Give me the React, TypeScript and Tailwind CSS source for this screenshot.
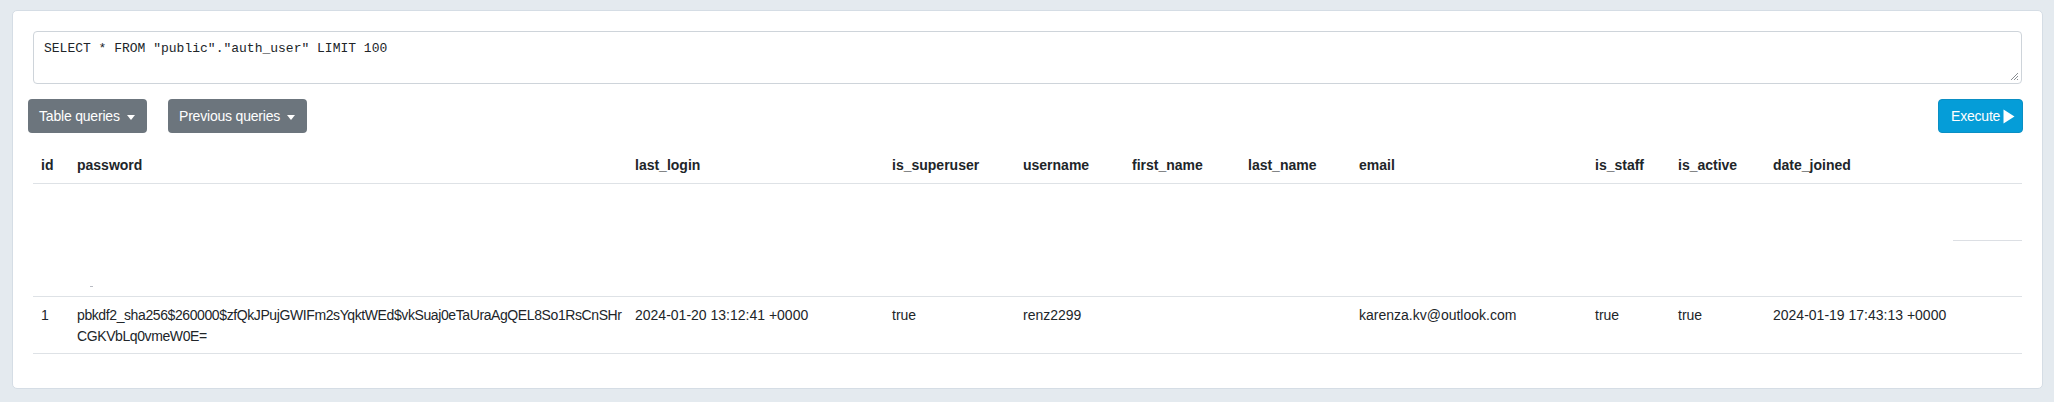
import React from "react";

const columns = [
  { name: "id", w: "w-[36px]" },
  { name: "password", w: "w-[558px]" },
  { name: "last_login", w: "w-[257px]" },
  { name: "is_superuser", w: "w-[131px]" },
  { name: "username", w: "w-[109px]" },
  { name: "first_name", w: "w-[116px]" },
  { name: "last_name", w: "w-[111px]" },
  { name: "email", w: "w-[236px]" },
  { name: "is_staff", w: "w-[83px]" },
  { name: "is_active", w: "w-[95px]" },
  { name: "date_joined", w: "w-[257px]" },
];

// password wraps exactly where the original grid broke it
const passwordLines = [
  "pbkdf2_sha256$260000$zfQkJPujGWIFm2sYqktWEd$vkSuaj0eTaUraAgQEL8So1RsCnSHr",
  "CGKVbLq0vmeW0E=",
];

const rows = [
  [
    "1",
    "",
    "2024-01-20 13:12:41 +0000",
    "true",
    "renz2299",
    "",
    "",
    "karenza.kv@outlook.com",
    "true",
    "true",
    "2024-01-19 17:43:13 +0000",
  ],
];

function Caret() {
  return (
    <span className="inline-block w-0 h-0 border-t-[5px] border-t-white border-x-[4px] border-x-transparent ml-auto mt-[2px]" />
  );
}

function DropButton({ label, w }: { label: string; w: string }) {
  return (
    <button className={`${w} h-[34px] flex items-center pl-[11px] pr-[12px] rounded-[4px] bg-[#6c757d] text-white text-[14px] tracking-[-0.2px]`}>
      {label}
      <Caret />
    </button>
  );
}

export default function App() {
  return (
    <div
      className="h-[402px] bg-[#e4eaef] pt-[10px] pl-[12px] text-[#212529]"
      style={{ fontFamily: '"Liberation Sans", Arial, sans-serif' }}
    >
      <div className="w-[2031px] h-[379px] bg-white border border-[#d5dde5] rounded-[5px] px-[20px] pt-[20px]">
        <div className="h-[53px] border border-[#ced4da] rounded-[4px] px-[10px] py-[8px] font-['Liberation_Mono',monospace] text-[13px] leading-[18px] relative">
          SELECT * FROM "public"."auth_user" LIMIT 100
          <svg className="absolute right-[2px] bottom-[2px]" width="9" height="9" viewBox="0 0 9 9">
            <path d="M8 1L1 8M8 4L4 8M8 7L7 8" stroke="#8a8f94" strokeWidth="1" />
          </svg>
        </div>

        <div className="flex items-center mt-[15px]">
          <div className="flex gap-[21px] ml-[-5px]">
            <DropButton label="Table queries" w="w-[119px]" />
            <DropButton label="Previous queries" w="w-[139px]" />
          </div>
          <button className="ml-auto mr-[-1px] h-[34px] w-[85px] flex items-center pl-[12px] rounded-[4px] bg-[#059dd8] border border-[#0a8fc4] text-white text-[14px] tracking-[-0.2px]">
            Execute
            <svg className="ml-[3px]" width="12" height="15" viewBox="0 0 12 15">
              <path d="M0.5 0.5L11.5 7.5L0.5 14.5Z" fill="white" />
            </svg>
          </button>
        </div>

        <table className="table-fixed w-full mt-[15px] border-collapse text-[14px] leading-[21px]">
          <thead>
            <tr className="border-b border-[#dee2e6]">
              {columns.map((c) => (
                <th key={c.name} className={`${c.w} text-left font-bold px-[8px] py-[7px]`}>
                  {c.name}
                </th>
              ))}
            </tr>
          </thead>
          <tbody>
            <tr className="border-b border-[#dee2e6]">
              <td className="h-[113px] p-0" />
              <td className="h-[113px] p-0 align-bottom pl-[21px] pb-[9px]">
                <div className="w-[3px] h-px bg-[#b9bcc4]" />
              </td>
              <td className="p-0" />
              <td className="p-0" />
              <td className="p-0" />
              <td className="p-0" />
              <td className="p-0" />
              <td className="p-0" />
              <td className="p-0" />
              <td className="p-0" />
              <td className="p-0 align-middle">
                <div className="ml-auto w-[69px] h-px bg-[#dcdfe4]" />
              </td>
            </tr>
            {rows.map((r, i) => (
              <tr key={i} className="border-b border-[#dee2e6]">
                {r.map((v, j) =>
                  j === 1 ? (
                    <td key={j} className="align-top px-[8px] pt-[8px] pb-[6px] whitespace-nowrap tracking-[-0.4px]">
                      {passwordLines[0]}
                      <br />
                      {passwordLines[1]}
                    </td>
                  ) : (
                    <td key={j} className="align-top px-[8px] pt-[8px] pb-[6px]">
                      {v}
                    </td>
                  )
                )}
              </tr>
            ))}
          </tbody>
        </table>
      </div>
    </div>
  );
}
